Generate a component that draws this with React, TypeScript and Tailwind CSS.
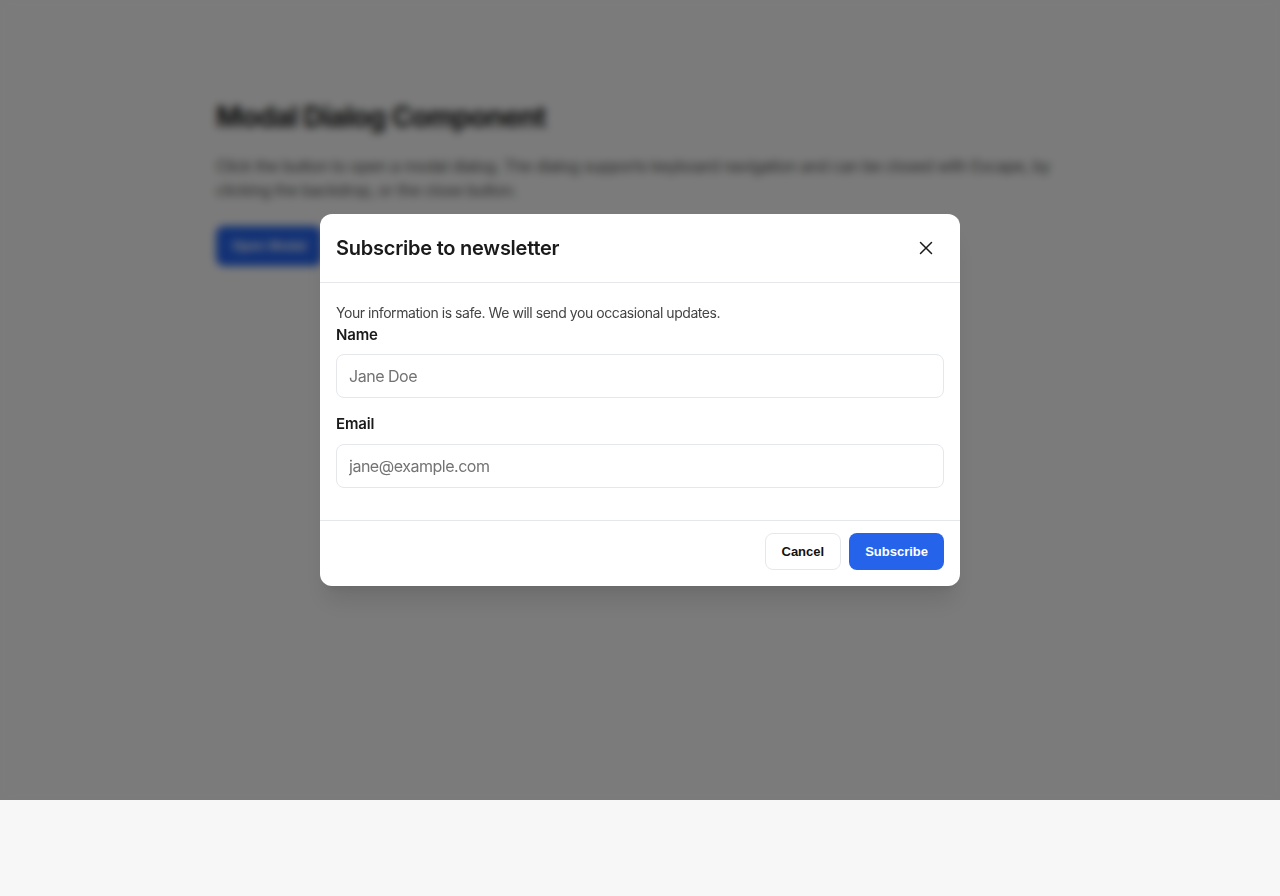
import React from "react";

export default function App() {
  return (
    <div className="min-h-screen bg-[#f7f7f7]" style={{ fontFamily: "Inter, 'Noto Sans', sans-serif" }}>
      <div className="relative h-[800px]">
        <div className="mx-auto max-w-4xl px-6 pt-[99px]">
          <h1 className="text-[28px] font-bold leading-9 tracking-[-0.024em] text-[#1a1a1a]">Modal Dialog Component</h1>
          <p className="mt-[19px] text-base leading-6 tracking-[-0.025em] text-[#555]">
            Click the button to open a modal dialog. The dialog supports keyboard navigation and can be closed with Escape, by clicking the backdrop, or the close button.
          </p>
          <button
            className="mt-6 h-10 rounded-lg bg-[#2563eb] px-4 text-[13px] font-bold text-white"
            style={{ fontFamily: "'Liberation Sans', Arial, sans-serif" }}
          >
            Open Modal
          </button>
        </div>
        <div className="absolute inset-0 flex items-center justify-center bg-black/50 backdrop-blur-[4px]">
          <div className="w-[640px] rounded-xl bg-white shadow-xl">
            <div className="flex h-[69px] items-center justify-between border-b border-gray-200 px-4">
              <h2 className="text-xl font-semibold tracking-[-0.012em] text-[#1a1a1a]">Subscribe to newsletter</h2>
              <button className="mr-0.5 flex h-8 w-8 items-center justify-center text-[#1a1a1a]">
                <svg width="14" height="14" viewBox="0 0 14 14" fill="none" stroke="currentColor" strokeWidth="1.5" strokeLinecap="round">
                  <path d="M1.5 1.5L12.5 12.5M12.5 1.5L1.5 12.5" />
                </svg>
              </button>
            </div>
            <div className="px-4 pt-5 pb-8">
              <p className="text-sm leading-5 tracking-[-0.032em] text-[#444]">Your information is safe. We will send you occasional updates.</p>
              <label className="block text-[15px] font-semibold leading-6 tracking-[-0.01em] text-[#1a1a1a]">Name</label>
              <input
                placeholder="Jane Doe"
                className="mt-[7px] block h-11 w-full rounded-lg border border-gray-200 px-3 text-base tracking-[-0.03em] text-[#1a1a1a] placeholder:text-[#737373] outline-none"
              />
              <label className="mt-3.5 block text-[15px] font-semibold leading-6 tracking-[-0.01em] text-[#1a1a1a]">Email</label>
              <input
                placeholder="jane@example.com"
                className="mt-2 block h-11 w-full rounded-lg border border-gray-200 px-3 text-base tracking-[-0.03em] text-[#1a1a1a] placeholder:text-[#737373] outline-none"
              />
            </div>
            <div
              className="flex justify-end gap-2 border-t border-gray-200 px-4 pt-3 pb-4"
              style={{ fontFamily: "'Liberation Sans', Arial, sans-serif" }}
            >
              <button className="h-[37px] rounded-lg border border-gray-200 bg-white px-4 text-[13px] font-bold text-[#111]">
                Cancel
              </button>
              <button className="h-[37px] rounded-lg bg-[#2563eb] px-4 text-[13px] font-bold text-white">
                Subscribe
              </button>
            </div>
          </div>
        </div>
      </div>
    </div>
  );
}
